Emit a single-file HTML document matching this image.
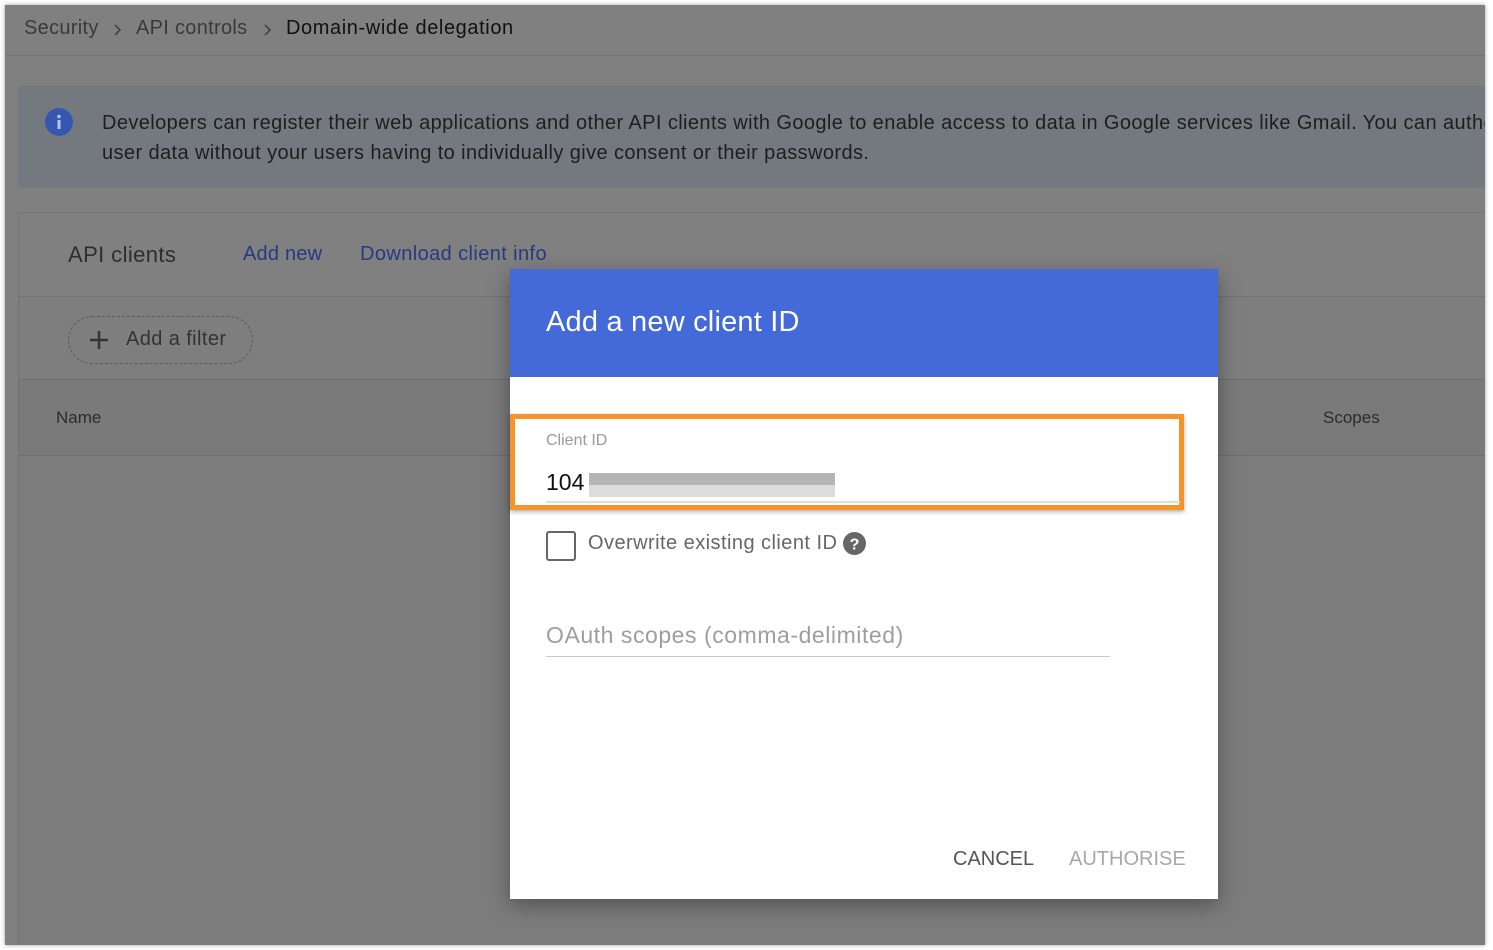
<!DOCTYPE html>
<html><head><meta charset="utf-8"><style>
*{box-sizing:border-box;margin:0;padding:0}
body{width:1493px;height:950px;background:#fff;font-family:"Liberation Sans",sans-serif;position:relative;overflow:hidden}
.page{position:absolute;left:5px;top:5px;width:1480px;height:940px;background:#808080;box-shadow:0 0 4px rgba(0,0,0,.4);overflow:hidden}
.abs{position:absolute;white-space:nowrap}
</style></head><body>
<div class="page">
  <div class="abs" style="left:19px;top:12px;font-size:20px;color:#3a3a3a;letter-spacing:.3px">Security</div>
  <svg class="abs" style="left:107px;top:17px" width="12" height="16"><path d="M3 3l5 5-5 5" stroke="#444" stroke-width="1.6" fill="none"/></svg>
  <div class="abs" style="left:131px;top:12px;font-size:20px;color:#3a3a3a;letter-spacing:.3px">API controls</div>
  <svg class="abs" style="left:257px;top:17px" width="12" height="16"><path d="M3 3l5 5-5 5" stroke="#444" stroke-width="1.6" fill="none"/></svg>
  <div class="abs" style="left:281px;top:12px;font-size:20px;color:#111;letter-spacing:.6px">Domain-wide delegation</div>
  <div class="abs" style="left:0;top:50px;width:1480px;height:1px;background:#757575"></div>
  <div class="abs" style="left:13px;top:81px;width:1480px;height:102px;background:#747980;border-radius:4px"></div>
  <svg class="abs" style="left:39px;top:102px" width="30" height="30"><circle cx="15" cy="15" r="14" fill="#3458b0"/><rect x="13.5" y="13" width="3" height="9" fill="#b8c4e0"/><circle cx="15" cy="9.5" r="1.8" fill="#b8c4e0"/></svg>
  <div class="abs" style="left:97px;top:103px;font-size:20px;line-height:30px;color:#1e1e1e;letter-spacing:.4px">Developers can register their web applications and other API clients with Google to enable access to data in Google services like Gmail. You can authorise<br>user data without your users having to individually give consent or their passwords.</div>
  <div class="abs" style="left:13px;top:207px;width:1480px;height:740px;border:1px solid #737373;background:#7c7c7c"></div>
  <div class="abs" style="left:14px;top:208px;width:1480px;height:84px;background:#808080;border-bottom:1px solid #727272"></div>
  <div class="abs" style="left:63px;top:237px;font-size:22px;color:#2e2e2e;letter-spacing:.4px">API clients</div>
  <div class="abs" style="left:238px;top:238px;font-size:20px;color:#263a80;letter-spacing:.2px">Add new</div>
  <div class="abs" style="left:355px;top:238px;font-size:20px;color:#263a80;letter-spacing:.4px">Download client info</div>
  <div class="abs" style="left:14px;top:292px;width:1480px;height:83px;background:#7e7e7e;border-bottom:1px solid #6e6e6e"></div>
  <div class="abs" style="left:63px;top:311px;width:185px;height:48px;border:1px dashed #5a5a5a;border-radius:24px"></div>
  <svg class="abs" style="left:83px;top:324px" width="22" height="22"><path d="M11 2v18M2 11h18" stroke="#333" stroke-width="2.4"/></svg>
  <div class="abs" style="left:121px;top:323px;font-size:20px;color:#333;letter-spacing:.4px">Add a filter</div>
  <div class="abs" style="left:14px;top:376px;width:1480px;height:75px;background:#7a7a7a;border-bottom:1px solid #6e6e6e"></div>
  <div class="abs" style="left:51px;top:403px;font-size:17px;color:#2c2c2c">Name</div>
  <div class="abs" style="left:1318px;top:403px;font-size:17px;color:#2c2c2c">Scopes</div>

  <div class="abs" style="left:505px;top:264px;width:708px;height:630px;background:#fff;box-shadow:0 6px 20px rgba(0,0,0,.35)">
    <div style="height:108px;background:#4469d8;color:#fff;font-size:29px;padding:37px 0 0 36px;letter-spacing:.2px">Add a new client ID</div>
  </div>
  <div class="abs" style="left:505px;top:409px;width:674px;height:96px;border:5px solid #f7932c;box-shadow:0 2px 4px rgba(0,0,0,.3)"></div>
  <div class="abs" style="left:541px;top:427px;font-size:16px;color:#9a9a9a">Client ID</div>
  <div class="abs" style="left:541px;top:464px;font-size:23px;color:#111">104</div>
  <div class="abs" style="left:584px;top:468px;width:246px;height:24px;background:linear-gradient(to bottom,#b5b5b5 0 50%,#dcdcdc 50% 100%)"></div>
  <div class="abs" style="left:541px;top:496px;width:634px;height:2px;background:#ddd"></div>
  <div class="abs" style="left:541px;top:526px;width:30px;height:30px;border:2.5px solid #666;border-radius:3px"></div>
  <div class="abs" style="left:583px;top:527px;font-size:20px;color:#666;letter-spacing:.45px">Overwrite existing client ID</div>
  <svg class="abs" style="left:838px;top:527px" width="23" height="23"><circle cx="11.5" cy="11.5" r="11.5" fill="#666"/><text x="11.5" y="17.5" font-size="16" font-weight="bold" text-anchor="middle" fill="#fff" font-family="Liberation Sans">?</text></svg>
  <div class="abs" style="left:541px;top:617px;font-size:23px;color:#9e9e9e;letter-spacing:.55px">OAuth scopes (comma-delimited)</div>
  <div class="abs" style="left:541px;top:651px;width:564px;height:1px;background:#c8c8c8"></div>
  <div class="abs" style="left:948px;top:843px;font-size:20px;color:#555">CANCEL</div>
  <div class="abs" style="left:1064px;top:843px;font-size:20px;color:#a8a8a8">AUTHORISE</div>
</div>
</body></html>
